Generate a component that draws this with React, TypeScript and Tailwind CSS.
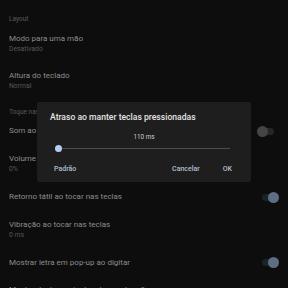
import React from "react";

type Row = {
  kind: "header" | "item";
  title: string;
  sub?: string;
  h: number;
  toggle?: "on" | "off";
};

const rows: Row[] = [
  { kind: "header", title: "Layout", h: 21 },
  { kind: "item", title: "Modo para uma mão", sub: "Desativado", h: 29 },
  { kind: "item", title: "Altura do teclado", sub: "Normal", h: 46 },
  { kind: "header", title: "Toque nas teclas", h: 16 },
  { kind: "item", title: "Som ao tocar nas teclas", h: 22, toggle: "off" },
  { kind: "item", title: "Volume do som ao tocar nas teclas", sub: "0%", h: 44 },
  { kind: "item", title: "Retorno tátil ao tocar nas teclas", h: 22, toggle: "on" },
  { kind: "item", title: "Vibração ao tocar nas teclas", sub: "0 ms", h: 44 },
  { kind: "item", title: "Mostrar letra em pop-up ao digitar", h: 21, toggle: "on" },
  { kind: "item", title: "Mostrar teclas variantes de acentuação", sub: "", h: 34 },
];

function Toggle({ on }: { on: boolean }) {
  return on ? (
    <div className="relative w-[16px] h-[7px] rounded-full bg-[#1c222b]">
      <div className="absolute -right-[1px] -top-[2px] w-[11px] h-[11px] rounded-full bg-[#5d6d84]" />
    </div>
  ) : (
    <div className="relative w-[16px] h-[7px] mr-[4px] rounded-full bg-[#262626]">
      <div className="absolute -left-[1px] -top-[2px] w-[11px] h-[11px] rounded-full bg-[#454545]" />
    </div>
  );
}

export default function App() {
  return (
    <div className="relative w-[288px] h-[288px] overflow-hidden bg-[#0d0d0d] font-['Roboto',sans-serif]">
      <div className="flex flex-col pt-[8px]">
        {rows.map((r) => (
          <div
            key={r.title}
            style={{ height: r.h }}
            className="shrink-0 flex items-center justify-between pl-[9px] pr-[10px]"
          >
            {r.kind === "header" ? (
              <span className="text-[6.5px] leading-[8px] text-[#5a5a5a] whitespace-nowrap">{r.title}</span>
            ) : (
              <div className="flex flex-col">
                <span className="text-[8px] leading-[10px] text-[#8c8c8c] whitespace-nowrap">{r.title}</span>
                {r.sub !== undefined && (
                  <span className="text-[6.8px] leading-[9px] mt-[1px] text-[#575757]">{r.sub}</span>
                )}
              </div>
            )}
            {r.toggle && <Toggle on={r.toggle === "on"} />}
          </div>
        ))}
      </div>

      {/* dialog over the list */}
      <div className="absolute left-[37px] top-[102px] w-[214px] h-[80px] rounded-[2px] bg-[#1e1e1e] flex flex-col">
        <div className="pl-[13px] pt-[10px] text-[8.6px] leading-[11px] font-medium text-[#e4e4e4]">
          Atraso ao manter teclas pressionadas
        </div>
        <div className="mt-[10px] text-center text-[6.3px] leading-[8px] text-[#cfcfcf]">110 ms</div>
        <div className="relative mx-[21px] mt-[7px] h-[1px] bg-[#4d4d4d]">
          <div className="absolute -left-[3.5px] -top-[3px] w-[7px] h-[7px] rounded-full bg-[#b6cdf3]" />
        </div>
        <div className="flex items-center mt-[16px] pl-[17px] pr-[19px] text-[7px] leading-[9px] font-medium text-[#b3bfcf]">
          <span>Padrão</span>
          <span className="ml-auto">Cancelar</span>
          <span className="ml-[23px]">OK</span>
        </div>
      </div>
    </div>
  );
}
